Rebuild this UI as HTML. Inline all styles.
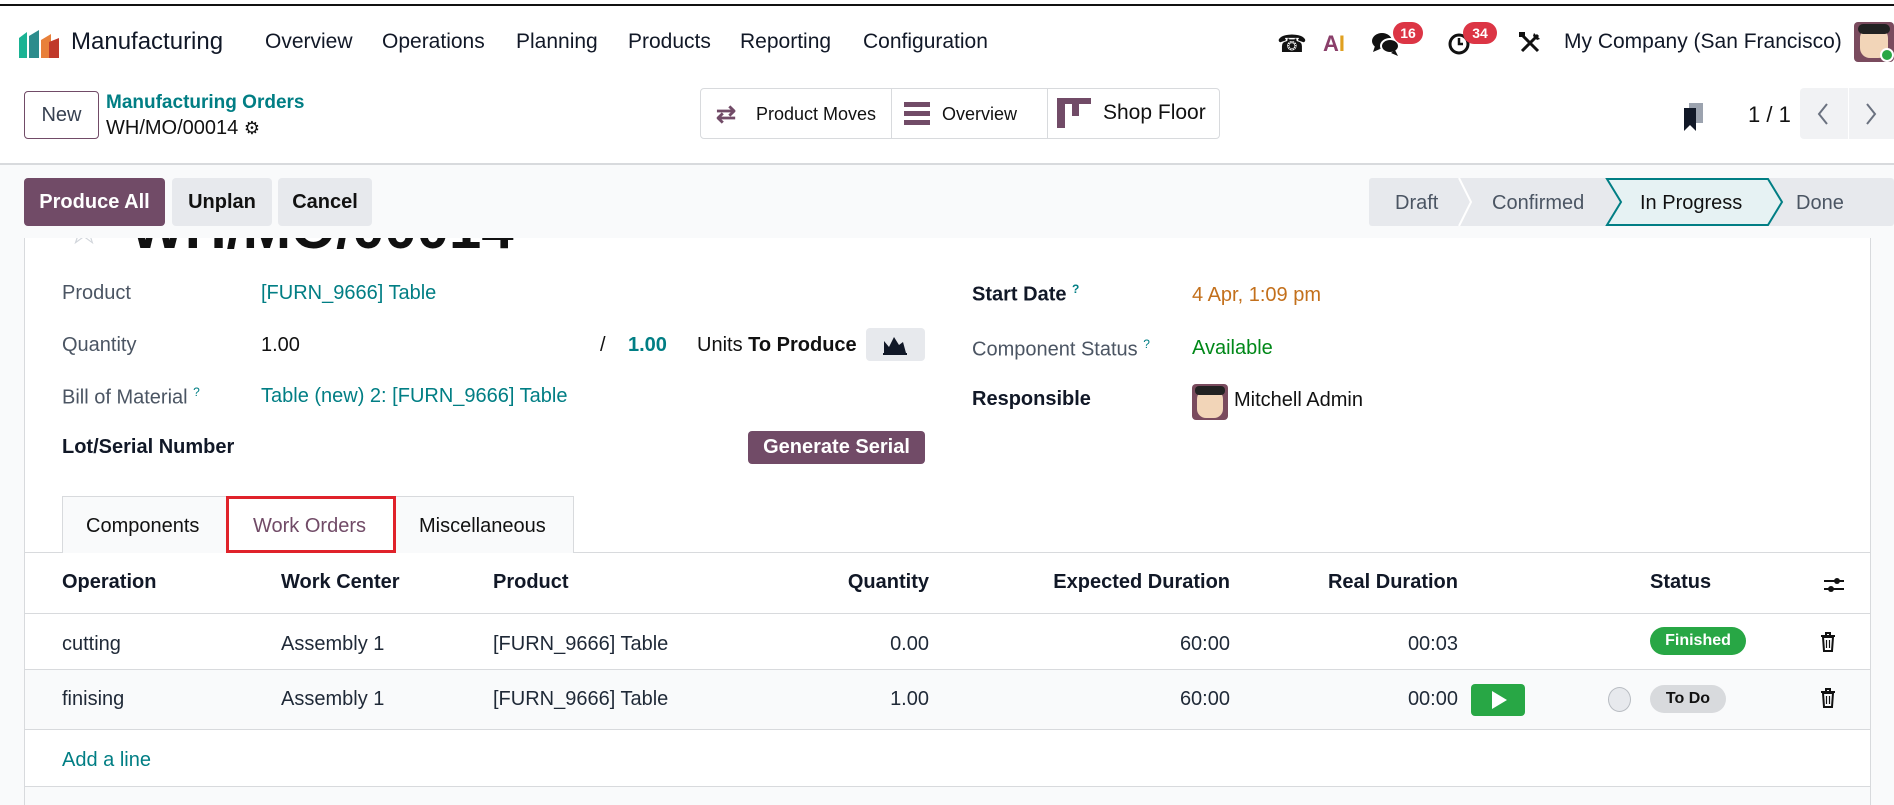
<!DOCTYPE html>
<html><head><meta charset="utf-8">
<style>
*{box-sizing:border-box;margin:0;padding:0}
body{width:1894px;height:805px;overflow:hidden;background:#fff;font-family:"Liberation Sans",sans-serif;color:#1f2937;position:relative}
.a{position:absolute;white-space:nowrap}
.nav{font-size:21px;color:#111827;top:30px}
.lbl{font-size:20px;color:#4b5563}
.lblb{font-size:20px;color:#111827;font-weight:bold}
.val{font-size:20px}
.teal{color:#017e84}
.th{font-size:20px;font-weight:bold;color:#111827;top:571px}
.td{font-size:20px;color:#1f2937}
sup{font-size:12px;color:#017e84}
</style></head><body>
<div class="a" style="left:0;top:4px;width:1894px;height:2px;background:#111"></div>
<svg class="a" style="left:19px;top:28px" width="42" height="30" viewBox="0 0 42 30"><path d="M0 10 L8 4 L8 30 L0 30Z" fill="#1ab394"/><path d="M10 8 L20 2 L20 30 L10 30Z" fill="#2c8c8c"/><path d="M22 12 L32 6 L32 30 L22 30Z" fill="#e8803a"/><path d="M30 14 L40 10 L40 30 L30 30Z" fill="#c0392b"/></svg>
<div class="a nav" style="left:71px;top:28px;font-size:24px">Manufacturing</div>
<div class="a nav" style="left:265px">Overview</div>
<div class="a nav" style="left:382px">Operations</div>
<div class="a nav" style="left:516px">Planning</div>
<div class="a nav" style="left:628px">Products</div>
<div class="a nav" style="left:740px">Reporting</div>
<div class="a nav" style="left:863px">Configuration</div>
<div class="a" style="left:1277px;top:30px;font-size:24px;color:#111">☎</div>
<div class="a" style="left:1323px;top:31px;font-size:22px;font-weight:bold;color:#8a3f6a">A<span style="color:#e0a020">I</span></div>
<svg class="a" style="left:1371px;top:30px" width="30" height="28"><ellipse cx="11" cy="11" rx="10" ry="8" fill="#111"/><ellipse cx="19" cy="16" rx="9" ry="7" fill="#111" stroke="#fff" stroke-width="2"/><path d="M4 16l-2 6 7-3z" fill="#111"/><path d="M24 20l3 6-7-3z" fill="#111"/></svg>
<div class="a" style="left:1393px;top:22px;width:30px;height:22px;border-radius:11px;background:#dc3545;color:#fff;font-size:14px;font-weight:bold;text-align:center;line-height:22px">16</div>
<svg class="a" style="left:1447px;top:32px" width="24" height="24"><circle cx="12" cy="12" r="9" fill="none" stroke="#111" stroke-width="3"/><path d="M12 6v6h4" stroke="#111" stroke-width="2.5" fill="none"/></svg>
<div class="a" style="left:1463px;top:22px;width:34px;height:22px;border-radius:11px;background:#dc3545;color:#fff;font-size:14px;font-weight:bold;text-align:center;line-height:22px">34</div>
<svg class="a" style="left:1518px;top:31px" width="24" height="24"><path d="M4 20L20 4M4 4l16 16" stroke="#111" stroke-width="3"/><path d="M16 2l6 6-3 1-4-4z" fill="#111"/><rect x="1" y="1" width="6" height="5" fill="#111"/></svg>
<div class="a nav" style="left:1564px">My Company (San Francisco)</div>
<div class="a" style="left:1854px;top:22px;width:40px;height:40px;border-radius:4px;background:#7a4b5e"></div>
<div class="a" style="left:1860px;top:28px;width:28px;height:30px;border-radius:10px;background:#f2d5b8"></div>
<div class="a" style="left:1858px;top:24px;width:32px;height:10px;border-radius:5px;background:#222"></div>
<div class="a" style="left:1880px;top:48px;width:14px;height:14px;border-radius:7px;background:#28a745;border:2px solid #fff"></div>
<div class="a" style="left:24px;top:91px;width:75px;height:48px;border:1px solid #714b67;border-radius:4px;font-size:20px;line-height:46px;text-align:center;color:#374151">New</div>
<div class="a teal" style="left:106px;top:92px;font-size:19px;font-weight:bold">Manufacturing Orders</div>
<div class="a" style="left:106px;top:117px;font-size:20px;color:#111">WH/MO/00014 <span style="font-size:18px">⚙</span></div>
<div class="a" style="left:700px;top:88px;width:520px;height:51px;border:1px solid #d8dadd;border-radius:4px"></div>
<div class="a" style="left:891px;top:88px;width:1px;height:51px;background:#d8dadd"></div>
<div class="a" style="left:1047px;top:88px;width:1px;height:51px;background:#d8dadd"></div>
<div class="a" style="left:716px;top:100px;font-size:24px;color:#714b67;font-weight:bold">⇄</div>
<div class="a" style="left:756px;top:104px;font-size:18px;color:#111">Product Moves</div>
<div class="a" style="left:904px;top:102px;width:26px;height:5px;background:#714b67;box-shadow:0 9px 0 #714b67,0 18px 0 #714b67"></div>
<div class="a" style="left:942px;top:104px;font-size:18px;color:#111">Overview</div>
<div class="a" style="left:1057px;top:98px;width:34px;height:6px;background:#714b67"></div>
<div class="a" style="left:1057px;top:98px;width:8px;height:30px;background:#714b67"></div>
<div class="a" style="left:1072px;top:98px;width:7px;height:18px;background:#714b67"></div>
<div class="a" style="left:1103px;top:101px;font-size:21px;color:#111">Shop Floor</div>
<svg class="a" style="left:1682px;top:103px" width="22" height="28"><rect x="7" y="0" width="14" height="20" fill="#9ca3af"/><path d="M2 5h12v23l-6-6-6 6z" fill="#111827"/></svg>
<div class="a" style="left:1748px;top:102px;font-size:22px;color:#111">1 / 1</div>
<div class="a" style="left:1800px;top:88px;width:94px;height:51px;background:#f1f2f4;border-radius:4px 0 0 4px"></div>
<div class="a" style="left:1848px;top:88px;width:1px;height:51px;background:#fff"></div>
<svg class="a" style="left:1816px;top:102px" width="14" height="24"><path d="M11 2L3 12l8 10" stroke="#6b7280" stroke-width="2" fill="none"/></svg>
<svg class="a" style="left:1864px;top:102px" width="14" height="24"><path d="M3 2l8 10-8 10" stroke="#6b7280" stroke-width="2" fill="none"/></svg>
<div class="a" style="left:0;top:163px;width:1894px;height:1px;background:#d8dadd"></div>
<div class="a" style="left:0;top:164px;width:1894px;height:641px;background:#f9fafb"></div>
<!-- sheet -->
<div class="a" style="left:24px;top:200px;width:1847px;height:605px;background:#fff;border-left:1px solid #d8dadd;border-right:1px solid #d8dadd"></div>
<div class="a" style="left:66px;top:211px;font-size:40px;color:#d1d5db;line-height:40px">☆</div>
<div class="a" style="left:130px;top:200px;font-size:58px;font-weight:bold;color:#111;line-height:58px">WH/MO/00014</div>
<div class="a" style="left:0;top:164px;width:1894px;height:74px;background:#f9fafb;border-top:1px solid #d8dadd"></div>
<div class="a" style="left:24px;top:178px;width:141px;height:48px;background:#714b67;border-radius:4px;color:#fff;font-size:20px;font-weight:bold;text-align:center;line-height:48px">Produce All</div>
<div class="a" style="left:172px;top:178px;width:100px;height:48px;background:#e7e9ed;border-radius:4px;color:#111;font-size:20px;font-weight:bold;text-align:center;line-height:48px">Unplan</div>
<div class="a" style="left:278px;top:178px;width:94px;height:48px;background:#e7e9ed;border-radius:4px;color:#111;font-size:20px;font-weight:bold;text-align:center;line-height:48px">Cancel</div>
<svg class="a" style="left:1369px;top:178px" width="525" height="48"><rect width="525" height="48" rx="3" fill="#e7e9ed"/><path d="M90 0l12 24-12 24" stroke="#fff" stroke-width="2" fill="none"/><path d="M238 1h161l14 23-14 23H238l14-23z" fill="#e6f2f3" stroke="#017e84" stroke-width="2"/><text x="26" y="31" font-size="20" fill="#4b5563" font-family="Liberation Sans">Draft</text><text x="123" y="31" font-size="20" fill="#4b5563" font-family="Liberation Sans">Confirmed</text><text x="271" y="31" font-size="20" fill="#111" font-family="Liberation Sans">In Progress</text><text x="427" y="31" font-size="20" fill="#4b5563" font-family="Liberation Sans">Done</text></svg>
<div class="a lbl" style="left:62px;top:282px">Product</div>
<div class="a val teal" style="left:261px;top:282px">[FURN_9666] Table</div>
<div class="a lbl" style="left:62px;top:334px">Quantity</div>
<div class="a val" style="left:261px;top:334px;color:#111">1.00</div>
<div class="a val" style="left:600px;top:334px;color:#111">/</div>
<div class="a val teal" style="left:628px;top:334px;font-weight:bold">1.00</div>
<div class="a val" style="left:697px;top:334px;color:#111">Units <b>To Produce</b></div>
<div class="a" style="left:866px;top:328px;width:59px;height:33px;background:#e7e9ed;border-radius:4px"></div>
<svg class="a" style="left:883px;top:335px" width="24" height="20"><path d="M1 18V6l5 6 5-10 5 8 4-3 3 11z" fill="#111827"/><path d="M0 19h24" stroke="#111827" stroke-width="2"/></svg>
<div class="a lbl" style="left:62px;top:385px">Bill of Material <sup>?</sup></div>
<div class="a val teal" style="left:261px;top:385px">Table (new) 2: [FURN_9666] Table</div>
<div class="a lblb" style="left:62px;top:436px">Lot/Serial Number</div>
<div class="a" style="left:748px;top:431px;width:177px;height:33px;background:#714b67;border-radius:4px;color:#fff;font-size:20px;font-weight:bold;text-align:center;line-height:33px">Generate Serial</div>
<div class="a lblb" style="left:972px;top:282px">Start Date <sup>?</sup></div>
<div class="a val" style="left:1192px;top:284px;color:#c3701c">4 Apr, 1:09 pm</div>
<div class="a lbl" style="left:972px;top:337px">Component Status <sup>?</sup></div>
<div class="a val" style="left:1192px;top:337px;color:#008818">Available</div>
<div class="a lblb" style="left:972px;top:388px">Responsible</div>
<div class="a" style="left:1192px;top:384px;width:36px;height:36px;border-radius:4px;background:#7a4b5e"></div>
<div class="a" style="left:1197px;top:390px;width:26px;height:28px;border-radius:9px;background:#f2d5b8"></div>
<div class="a" style="left:1195px;top:386px;width:30px;height:9px;border-radius:4px;background:#222"></div>
<div class="a val" style="left:1234px;top:389px;color:#111">Mitchell Admin</div>
<div class="a" style="left:24px;top:552px;width:1847px;height:1px;background:#d8dadd"></div>
<div class="a" style="left:62px;top:496px;width:512px;height:57px;background:#f9fafb;border:1px solid #d8dadd;border-bottom:none"></div>
<div class="a" style="left:226px;top:496px;width:170px;height:57px;background:#fff;border:3px solid #e0222a"></div>
<div class="a" style="left:86px;top:515px;font-size:20px;color:#111">Components</div>
<div class="a" style="left:253px;top:515px;font-size:20px;color:#714b67">Work Orders</div>
<div class="a" style="left:419px;top:515px;font-size:20px;color:#111">Miscellaneous</div>
<div class="a th" style="left:62px">Operation</div>
<div class="a th" style="left:281px">Work Center</div>
<div class="a th" style="left:493px">Product</div>
<div class="a th" style="left:729px;width:200px;text-align:right">Quantity</div>
<div class="a th" style="left:930px;width:300px;text-align:right">Expected Duration</div>
<div class="a th" style="left:1158px;width:300px;text-align:right">Real Duration</div>
<div class="a th" style="left:1650px">Status</div>
<svg class="a" style="left:1823px;top:574px" width="22" height="22"><path d="M1 7h20M1 15h20" stroke="#111" stroke-width="2"/><circle cx="14" cy="7" r="3" fill="#111"/><circle cx="8" cy="15" r="3" fill="#111"/></svg>
<div class="a" style="left:24px;top:613px;width:1847px;height:1px;background:#d8dadd"></div>
<div class="a td" style="left:62px;top:633px">cutting</div>
<div class="a td" style="left:281px;top:633px">Assembly 1</div>
<div class="a td" style="left:493px;top:633px">[FURN_9666] Table</div>
<div class="a td" style="left:729px;top:633px;width:200px;text-align:right">0.00</div>
<div class="a td" style="left:930px;top:633px;width:300px;text-align:right">60:00</div>
<div class="a td" style="left:1158px;top:633px;width:300px;text-align:right">00:03</div>
<div class="a" style="left:1650px;top:627px;width:96px;height:28px;border-radius:14px;background:#28a745;color:#fff;font-size:16px;font-weight:bold;text-align:center;line-height:28px">Finished</div>
<svg class="a" style="left:1820px;top:632px" width="16" height="20"><path d="M1 4h14M6 4V1h4v3" stroke="#111" stroke-width="2" fill="none"/><path d="M3 5h10l-1 14H4z" fill="none" stroke="#111" stroke-width="2"/><path d="M6.5 8v8M9.5 8v8" stroke="#111" stroke-width="1.2"/></svg>
<div class="a" style="left:25px;top:669px;width:1845px;height:61px;background:#f9fafb;border-top:1px solid #d8dadd;border-bottom:1px solid #d8dadd"></div>
<div class="a td" style="left:62px;top:688px">finising</div>
<div class="a td" style="left:281px;top:688px">Assembly 1</div>
<div class="a td" style="left:493px;top:688px">[FURN_9666] Table</div>
<div class="a td" style="left:729px;top:688px;width:200px;text-align:right">1.00</div>
<div class="a td" style="left:930px;top:688px;width:300px;text-align:right">60:00</div>
<div class="a td" style="left:1158px;top:688px;width:300px;text-align:right">00:00</div>
<div class="a" style="left:1471px;top:684px;width:54px;height:32px;border-radius:4px;background:#28a745"></div>
<svg class="a" style="left:1490px;top:690px" width="18" height="20"><path d="M2 1l15 9-15 9z" fill="#fff"/></svg>
<div class="a" style="left:1608px;top:687px;width:23px;height:25px;border-radius:50%;background:#e7e9ed;border:1px solid #b8bcc2"></div>
<div class="a" style="left:1650px;top:685px;width:76px;height:28px;border-radius:14px;background:#d8dadd;color:#111;font-size:16px;font-weight:bold;text-align:center;line-height:28px">To Do</div>
<svg class="a" style="left:1820px;top:688px" width="16" height="20"><path d="M1 4h14M6 4V1h4v3" stroke="#111" stroke-width="2" fill="none"/><path d="M3 5h10l-1 14H4z" fill="none" stroke="#111" stroke-width="2"/><path d="M6.5 8v8M9.5 8v8" stroke="#111" stroke-width="1.2"/></svg>
<div class="a teal" style="left:62px;top:749px;font-size:20px">Add a line</div>
<div class="a" style="left:25px;top:786px;width:1845px;height:19px;background:#f9fafb;border-top:1px solid #d8dadd"></div>
</body></html>
